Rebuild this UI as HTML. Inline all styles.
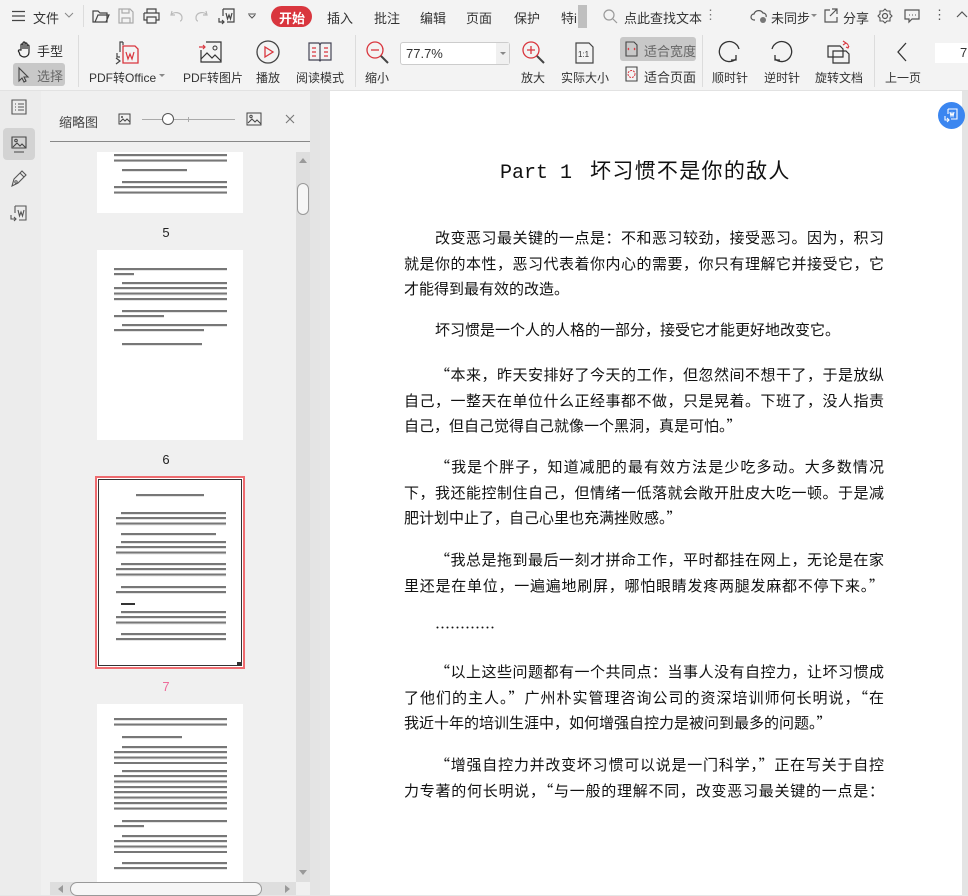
<!DOCTYPE html>
<html><head><meta charset="utf-8">
<style>
*{margin:0;padding:0;box-sizing:border-box}
body{width:968px;height:895px;overflow:hidden;background:#e6e6e6;font-family:"Liberation Sans","Noto Sans CJK SC",sans-serif;color:#333;position:relative}
.abs{position:absolute}
.tb{left:0;top:0;width:968px;height:91px;background:#f3f3f3;border-bottom:1px solid #e2e2e2}
.t{position:absolute;font-size:13px;color:#333;white-space:nowrap}
.lab{position:absolute;font-size:12px;color:#333;white-space:nowrap;text-align:center}
.sep{position:absolute;width:1px;background:#dcdcdc}
svg{position:absolute;overflow:visible}
.side{left:0;top:91px;width:41px;height:804px;background:#ececec}
.panel{left:41px;top:91px;width:279px;height:804px;background:#f0f0f0}
.doc{left:330px;top:91px;width:632px;height:804px;background:#fff}
.p{position:absolute;left:404px;width:480px;font-family:"Noto Sans CJK SC",sans-serif;font-size:15px;color:#111;line-height:25.5px}
.ln{display:block;text-align:justify;text-align-last:justify;height:25.5px;white-space:nowrap;overflow:visible}
.last{text-align-last:left}
.th{position:absolute;background:#fff}
.st{position:absolute;background:repeating-linear-gradient(#555 0 2px,#ddd 2px 3px,transparent 3px 5.4px);opacity:.8}
.pn{position:absolute;font-size:13px;color:#222;width:30px;text-align:center}
</style></head><body>
<div class="abs tb"></div>
<svg style="left:11px;top:10px" width="16" height="12"><path d="M1 1.5h13M1 6h13M1 10.5h13" stroke="#444" stroke-width="1.3"/></svg>
<div class="t" style="left:33px;top:8px">文件</div>
<svg style="left:64px;top:12px" width="10" height="6"><path d="M1 1l4 4 4-4" stroke="#888" fill="none"/></svg>
<div class="sep" style="left:83px;top:5px;height:22px"></div>
<svg style="left:92px;top:8px" width="18" height="16"><path d="M1 3h5l2 2h7v9H1z M3 14l3-7h11l-3 7" stroke="#444" fill="none" stroke-width="1.2"/></svg>
<svg style="left:118px;top:8px" width="16" height="16"><path d="M1 1h11l3 3v11H1z M4 1v4h7V1 M4 15v-5h8v5" stroke="#aaa" fill="none" stroke-width="1.2"/></svg>
<svg style="left:143px;top:8px" width="17" height="16"><path d="M4 5V1h9v4 M1 5h15v7h-3 M4 12H1V5 M4 9h9v6H4z" stroke="#444" fill="none" stroke-width="1.2"/></svg>
<svg style="left:170px;top:10px" width="13" height="12"><path d="M2 1L1 5l4 0 M1 5c3-4 11-3 11 3 0 2-1 3-2 3" stroke="#bbb" fill="none" stroke-width="1.2"/></svg>
<svg style="left:195px;top:10px" width="13" height="12"><path d="M11 1l1 4-4 0 M12 5C9 1 1 2 1 8c0 2 1 3 2 3" stroke="#bbb" fill="none" stroke-width="1.2"/></svg>
<svg style="left:218px;top:8px" width="18" height="18"><path d="M5 1h11v13H9 M5 1v7 M8 5l1.5 6 1.5-4 1.5 4L14 5 M1 10v4h5 M4 12l2 2-2 2" stroke="#444" fill="none" stroke-width="1.2"/></svg>
<svg style="left:247px;top:13px" width="10" height="6"><path d="M1 1h8 M2 2l3 3 3-3" stroke="#555" fill="none"/></svg>
<div class="abs" style="left:271px;top:6px;width:41px;height:21px;border-radius:11px;background:#d9363e"></div>
<div class="t" style="left:279px;top:8px;color:#fff;font-weight:bold">开始</div>
<div class="t" style="left:327px;top:8px">插入</div>
<div class="t" style="left:374px;top:8px">批注</div>
<div class="t" style="left:420px;top:8px">编辑</div>
<div class="t" style="left:466px;top:8px">页面</div>
<div class="t" style="left:514px;top:8px">保护</div>
<div class="t" style="left:561px;top:8px">特i</div>
<div class="abs" style="left:578px;top:5px;width:9px;height:23px;background:#bfbfbf"></div>
<svg style="left:603px;top:9px" width="15" height="15"><circle cx="6" cy="6" r="5" stroke="#999" fill="none" stroke-width="1.2"/><path d="M10 10l4 4" stroke="#999" stroke-width="1.2"/></svg>
<div class="t" style="left:624px;top:8px">点此查找文本</div>
<div class="t" style="left:704px;top:7px;color:#777">⋮</div>
<svg style="left:751px;top:8px" width="18" height="16"><path d="M4 12H3a3 3 0 010-6 5 5 0 019-1 3 3 0 013 4" stroke="#555" fill="none" stroke-width="1.2"/><circle cx="12" cy="12" r="3" fill="#777"/></svg>
<div class="t" style="left:771px;top:8px">未同步</div>
<svg style="left:811px;top:14px" width="6" height="4"><path d="M0 0h6L3 3z" fill="#888"/></svg>
<svg style="left:823px;top:8px" width="16" height="16"><path d="M7 2H2v12h12V9 M9 1h5v5 M14 1L7 8" stroke="#555" fill="none" stroke-width="1.2"/></svg>
<div class="t" style="left:843px;top:8px">分享</div>
<svg style="left:877px;top:8px" width="16" height="16"><circle cx="8" cy="8" r="2.5" stroke="#555" fill="none" stroke-width="1.2"/><path d="M8 1l2 2 3 0 0 3 2 2-2 2 0 3-3 0-2 2-2-2-3 0 0-3-2-2 2-2 0-3 3 0z" stroke="#555" fill="none" stroke-width="1.1"/></svg>
<svg style="left:904px;top:9px" width="16" height="14"><path d="M1 1h14v9H8l-3 3v-3H1z" stroke="#555" fill="none" stroke-width="1.2"/><path d="M5 6h1M8 6h1M11 6h1" stroke="#555"/></svg>
<div class="t" style="left:933px;top:7px;color:#555">⋮</div>
<svg style="left:957px;top:11px" width="11" height="7"><path d="M0 6l5-5 5 5" stroke="#555" fill="none" stroke-width="1.2"/></svg>
<svg style="left:17px;top:41px" width="17" height="17"><path d="M4 9V4a1 1 0 012 0v4V2a1 1 0 012 0v6V3a1 1 0 012 0v5V5a1 1 0 012 0v6c0 3-2 5-5 5-2 0-3-1-4-2L2 11a1 1 0 011-2z" stroke="#222" fill="none" stroke-width="1.2"/></svg>
<div class="t" style="left:37px;top:41px">手型</div>
<div class="abs" style="left:13px;top:63px;width:52px;height:23px;background:#c8c8c8;border-radius:3px"></div>
<svg style="left:18px;top:67px" width="12" height="16"><path d="M1 1v13l3-3 2 4 2-1-2-4h4z" stroke="#444" fill="none" stroke-width="1.1"/></svg>
<div class="t" style="left:37px;top:66px;color:#666">选择</div>
<div class="sep" style="left:78px;top:35px;height:52px"></div>
<svg style="left:113px;top:40px" width="28" height="26"><path d="M10 2H7v10 M10 2v3 M4 13v4h3" stroke="#444" fill="none" stroke-width="1.2"/><path d="M10 6h12l3 3v14H10z" stroke="#d9363e" fill="none" stroke-width="1.3"/><path d="M13 12l2 7 2-5 2 5 2-7" stroke="#d9363e" fill="none" stroke-width="1.2"/><path d="M3 18l4 3-4 3" stroke="#444" fill="none" stroke-width="1.2"/></svg>
<div class="lab" style="left:89px;top:69px">PDF转Office</div>
<svg style="left:159px;top:74px" width="6" height="4"><path d="M0 0h6L3 3z" fill="#888"/></svg>
<svg style="left:199px;top:41px" width="24" height="22"><path d="M7 1h15v20H2V9" stroke="#333" fill="none" stroke-width="1.2"/><path d="M0 6h6 M4 4l2 2-2 2" stroke="#d9363e" fill="none" stroke-width="1.2"/><circle cx="16" cy="7" r="2" stroke="#333" fill="none"/><path d="M2 18l6-6 5 5 3-3 6 6" stroke="#333" fill="none" stroke-width="1.2"/></svg>
<div class="lab" style="left:183px;top:69px">PDF转图片</div>
<svg style="left:256px;top:40px" width="24" height="24"><circle cx="12" cy="12" r="11" stroke="#444" fill="none" stroke-width="1.3"/><path d="M9 7v10l8-5z" stroke="#d9363e" fill="none" stroke-width="1.3"/></svg>
<div class="lab" style="left:256px;top:69px">播放</div>
<svg style="left:308px;top:42px" width="24" height="20"><path d="M1 1h10l1 2 1-2h10v17H13l-1 1-1-1H1z M12 3v15" stroke="#445" fill="none" stroke-width="1.2"/><path d="M4 6h4M4 10h4M4 14h4M16 6h4M16 10h4M16 14h4" stroke="#d9363e" stroke-width="1.2"/></svg>
<div class="lab" style="left:296px;top:69px">阅读模式</div>
<div class="sep" style="left:355px;top:35px;height:52px"></div>
<svg style="left:366px;top:41px" width="24" height="24"><circle cx="9" cy="9" r="8" stroke="#d9363e" fill="none" stroke-width="1.3"/><path d="M5 9h8" stroke="#d9363e" stroke-width="1.3"/><path d="M15 15l7 7" stroke="#444" stroke-width="2"/></svg>
<div class="lab" style="left:365px;top:69px">缩小</div>
<div class="abs" style="left:400px;top:42px;width:110px;height:23px;border:1px solid #ccc;border-radius:3px;background:#fff"></div>
<div class="abs" style="left:496px;top:43px;width:13px;height:21px;background:#f0f0f0"></div>
<svg style="left:500px;top:52px" width="6" height="4"><path d="M0 0h6L3 3z" fill="#888"/></svg>
<div class="t" style="left:406px;top:46px">77.7%</div>
<svg style="left:522px;top:41px" width="24" height="24"><circle cx="9" cy="9" r="8" stroke="#d9363e" fill="none" stroke-width="1.3"/><path d="M5 9h8M9 5v8" stroke="#d9363e" stroke-width="1.3"/><path d="M15 15l7 7" stroke="#444" stroke-width="2"/></svg>
<div class="lab" style="left:521px;top:69px">放大</div>
<svg style="left:575px;top:42px" width="20" height="22"><path d="M1 1h13l4 4v16H1z" stroke="#444" fill="none" stroke-width="1.2"/><text x="3" y="15" font-size="8" fill="#333" font-family="Liberation Sans">1:1</text></svg>
<div class="lab" style="left:561px;top:69px">实际大小</div>
<div class="abs" style="left:620px;top:37px;width:76px;height:24px;background:#c8c8c8;border-radius:3px"></div>
<svg style="left:625px;top:41px" width="13" height="16"><path d="M1 1h8l3 3v11H1z" stroke="#444" fill="none" stroke-width="1.1"/><path d="M4 7l-1 1 1 1M9 7l1 1-1 1" stroke="#d9363e" fill="none"/></svg>
<div class="t" style="left:644px;top:41px;color:#666">适合宽度</div>
<svg style="left:625px;top:66px" width="13" height="16"><path d="M1 1h11v14H1z" stroke="#444" fill="none" stroke-width="1.1"/><circle cx="6.5" cy="8" r="3.5" stroke="#d9363e" fill="none" stroke-dasharray="2 1"/></svg>
<div class="t" style="left:644px;top:67px">适合页面</div>
<div class="sep" style="left:702px;top:35px;height:52px"></div>
<svg style="left:719px;top:41px" width="22" height="22"><path d="M17 18A10 10 0 1 1 20 8" stroke="#333" fill="none" stroke-width="1.3"/><path d="M17 14v5h-5" stroke="#333" fill="none" stroke-width="1.3"/></svg>
<div class="lab" style="left:712px;top:69px">顺时针</div>
<svg style="left:770px;top:41px" width="22" height="22"><path d="M5 18A10 10 0 1 0 2 8" stroke="#333" fill="none" stroke-width="1.3"/><path d="M5 14v5h5" stroke="#333" fill="none" stroke-width="1.3"/></svg>
<div class="lab" style="left:764px;top:69px">逆时针</div>
<svg style="left:827px;top:40px" width="24" height="24"><path d="M1 6h12l3 3v8H1z M6 11h13l3 3v9H6z" stroke="#333" fill="#f3f3f3" stroke-width="1.2"/><path d="M16 1l3 2-3 2 M19 3c2 1 3 3 2 5 M22 6l-1 2-2-1" stroke="#d9363e" fill="none" stroke-width="1.1"/></svg>
<div class="lab" style="left:815px;top:69px">旋转文档</div>
<div class="sep" style="left:874px;top:35px;height:52px"></div>
<svg style="left:897px;top:42px" width="10" height="20"><path d="M9 1L1 10l8 9" stroke="#333" fill="none" stroke-width="1.3"/></svg>
<div class="lab" style="left:885px;top:69px">上一页</div>
<div class="abs" style="left:935px;top:43px;width:33px;height:20px;background:#fff"></div>
<div class="t" style="left:960px;top:45px">7</div>

<div class="abs side"></div>
<svg style="left:11px;top:99px" width="16" height="16"><path d="M1 1h14v14H1z" stroke="#555" fill="none" stroke-width="1.1"/><path d="M4 5h1M7 5h6M4 8h1M7 8h6M4 11h1M7 11h6" stroke="#555"/></svg>
<div class="abs" style="left:3px;top:128px;width:32px;height:32px;background:#d3d3d3;border-radius:4px"></div>
<svg style="left:11px;top:136px" width="16" height="18"><path d="M1 1h14v11H1z" stroke="#444" fill="none" stroke-width="1.1"/><circle cx="5" cy="4.5" r="1.3" stroke="#444" fill="none"/><path d="M2 11l4-4 3 3 2-2 4 4 M3 16h10" stroke="#444" fill="none" stroke-width="1.1"/></svg>
<svg style="left:10px;top:170px" width="18" height="18"><path d="M2 16l2-7 6-6 4 4-6 6z M10 3l2-2 4 4-2 2" stroke="#555" fill="none" stroke-width="1.1"/><circle cx="6" cy="12" r="1.2" stroke="#555" fill="none"/></svg>
<svg style="left:10px;top:205px" width="18" height="18"><path d="M5 1h11v14H9 M5 1v7 M8 5l1.5 6 1.5-4 1.5 4L14 5 M1 10v4h5 M4 12l2 2-2 2" stroke="#555" fill="none" stroke-width="1.1"/></svg>

<div class="abs panel"></div>
<div class="t" style="left:59px;top:112px;color:#444">缩略图</div>
<svg style="left:118px;top:113px" width="13" height="12"><path d="M1 1h11v10H1z M2 9l3-3 2 2 2-2 3 3" stroke="#444" fill="none"/><circle cx="4" cy="4" r="1" fill="#444"/></svg>
<div class="abs" style="left:142px;top:119px;width:93px;height:1px;background:#aaa"></div>
<div class="abs" style="left:162px;top:113px;width:12px;height:12px;border:1px solid #555;border-radius:50%;background:#fff"></div>
<div class="abs" style="left:188px;top:117px;width:1px;height:5px;background:#aaa"></div>
<svg style="left:246px;top:112px" width="16" height="14"><path d="M1 1h14v12H1z M2 11l4-4 3 3 2-2 4 4" stroke="#444" fill="none"/><circle cx="5" cy="4.5" r="1.2" stroke="#444" fill="none"/></svg>
<svg style="left:285px;top:114px" width="10" height="10"><path d="M1 1l8 8M9 1l-8 8" stroke="#777" stroke-width="1.1"/></svg>
<div class="abs" style="left:50px;top:141px;width:260px;height:1px;background:#888"></div>
<div class="abs" style="left:296px;top:152px;width:14px;height:730px;background:#dedede"></div>
<svg style="left:299px;top:158px" width="8" height="5"><path d="M0 5h8L4 0z" fill="#999"/></svg>
<div class="abs" style="left:297px;top:183px;width:12px;height:32px;border:1px solid #999;border-radius:6px;background:#f6f6f6"></div>
<svg style="left:299px;top:870px" width="8" height="5"><path d="M0 0h8L4 5z" fill="#999"/></svg>
<div class="abs" style="left:50px;top:882px;width:246px;height:13px;background:#dedede"></div>
<div class="abs" style="left:70px;top:882px;width:192px;height:14px;border:1px solid #999;border-radius:7px;background:#f6f6f6"></div>
<svg style="left:58px;top:885px" width="5" height="8"><path d="M5 0v8L0 4z" fill="#999"/></svg>
<svg style="left:285px;top:885px" width="5" height="8"><path d="M0 0v8l5-4z" fill="#999"/></svg>
<div class="abs" style="left:310px;top:91px;width:10px;height:804px;background:#e4e4e4"></div>

<div class="th" style="left:97px;top:152px;width:146px;height:61px"></div>
<div class="st" style="left:114px;top:154px;width:113px;height:8px"></div>
<div class="st" style="left:122px;top:169px;width:65px;height:3px"></div>
<div class="st" style="left:122px;top:181px;width:105px;height:3px"></div>
<div class="st" style="left:114px;top:186px;width:113px;height:8px"></div>
<div class="pn" style="left:151px;top:225px">5</div>
<div class="th" style="left:97px;top:250px;width:146px;height:190px"></div>
<div class="st" style="left:114px;top:268px;width:113px;height:3px"></div>
<div class="st" style="left:114px;top:273px;width:20px;height:3px"></div>
<div class="st" style="left:122px;top:282px;width:105px;height:3px"></div>
<div class="st" style="left:114px;top:287px;width:113px;height:14px"></div>
<div class="st" style="left:122px;top:310px;width:105px;height:3px"></div>
<div class="st" style="left:114px;top:315px;width:50px;height:3px"></div>
<div class="st" style="left:122px;top:324px;width:105px;height:3px"></div>
<div class="st" style="left:114px;top:329px;width:90px;height:3px"></div>
<div class="st" style="left:122px;top:343px;width:80px;height:3px"></div>
<div class="pn" style="left:151px;top:452px">6</div>
<div class="abs" style="left:95px;top:476px;width:150px;height:193px;border:2px solid #ee6b6f;background:#fff"></div>
<div class="abs" style="left:98px;top:479px;width:144px;height:187px;border:1px solid #333"></div>
<div class="abs" style="left:237px;top:662px;width:5px;height:4px;background:#333"></div>
<div class="st" style="left:136px;top:494px;width:68px;height:3px"></div>
<div class="st" style="left:121px;top:512px;width:105px;height:3px"></div>
<div class="st" style="left:116px;top:517px;width:110px;height:9px"></div>
<div class="st" style="left:121px;top:533px;width:95px;height:3px"></div>
<div class="st" style="left:121px;top:541px;width:105px;height:3px"></div>
<div class="st" style="left:116px;top:546px;width:110px;height:9px"></div>
<div class="st" style="left:121px;top:563px;width:105px;height:3px"></div>
<div class="st" style="left:116px;top:568px;width:110px;height:9px"></div>
<div class="st" style="left:121px;top:586px;width:105px;height:3px"></div>
<div class="st" style="left:116px;top:591px;width:110px;height:3px"></div>
<div class="abs" style="left:121px;top:603px;width:14px;height:2px;background:#333"></div>
<div class="st" style="left:121px;top:611px;width:105px;height:3px"></div>
<div class="st" style="left:116px;top:616px;width:110px;height:9px"></div>
<div class="st" style="left:121px;top:633px;width:105px;height:3px"></div>
<div class="st" style="left:116px;top:638px;width:110px;height:3px"></div>
<div class="pn" style="left:151px;top:679px;color:#ee6b9a">7</div>
<div class="th" style="left:97px;top:704px;width:146px;height:178px"></div>
<div class="st" style="left:114px;top:718px;width:113px;height:8px"></div>
<div class="st" style="left:122px;top:736px;width:60px;height:3px"></div>
<div class="st" style="left:122px;top:746px;width:105px;height:3px"></div>
<div class="st" style="left:114px;top:751px;width:113px;height:13px"></div>
<div class="st" style="left:122px;top:770px;width:105px;height:3px"></div>
<div class="st" style="left:114px;top:775px;width:113px;height:35px"></div>
<div class="st" style="left:122px;top:820px;width:105px;height:3px"></div>
<div class="st" style="left:114px;top:825px;width:30px;height:3px"></div>
<div class="st" style="left:122px;top:835px;width:105px;height:3px"></div>
<div class="st" style="left:114px;top:840px;width:113px;height:13px"></div>
<div class="st" style="left:122px;top:862px;width:105px;height:3px"></div>
<div class="st" style="left:114px;top:867px;width:113px;height:3px"></div>

<div class="abs doc"></div>
<div class="abs" style="left:962px;top:91px;width:6px;height:804px;background:#e4e4e4"></div>
<div class="abs" style="left:938px;top:102px;width:27px;height:27px;border-radius:50%;background:#3b86f0"></div>
<svg style="left:944px;top:108px" width="15" height="15"><path d="M4 1h9v10H7 M4 1v5 M6 4l1 4 1-3 1 3 1-4 M1 8v4h4 M3 10l2 2-2 2" stroke="#fff" fill="none" stroke-width="1.1"/></svg>
<div class="abs" style="left:500px;top:155px;font-size:20px;color:#111;white-space:nowrap"><span style="font-family:'Liberation Mono',monospace">Part 1</span><span style="display:inline-block;width:18px"></span><span style="font-family:'Noto Sans CJK SC',sans-serif;font-size:21px;letter-spacing:1.3px">坏习惯不是你的敌人</span></div>

<div class="p" style="top:225px">
<span class="ln" style="padding-left:31px">改变恶习最关键的一点是：不和恶习较劲，接受恶习。因为，积习</span>
<span class="ln">就是你的本性，恶习代表着你内心的需要，你只有理解它并接受它，它</span>
<span class="ln last">才能得到最有效的改造。</span></div>
<div class="p" style="top:317px"><span class="ln last" style="padding-left:31px">坏习惯是一个人的人格的一部分，接受它才能更好地改变它。</span></div>
<div class="p" style="top:362px">
<span class="ln" style="padding-left:31px">“本来，昨天安排好了今天的工作，但忽然间不想干了，于是放纵</span>
<span class="ln">自己，一整天在单位什么正经事都不做，只是晃着。下班了，没人指责</span>
<span class="ln last">自己，但自己觉得自己就像一个黑洞，真是可怕。”</span></div>
<div class="p" style="top:454px">
<span class="ln" style="padding-left:31px">“我是个胖子，知道减肥的最有效方法是少吃多动。大多数情况</span>
<span class="ln">下，我还能控制住自己，但情绪一低落就会敞开肚皮大吃一顿。于是减</span>
<span class="ln last">肥计划中止了，自己心里也充满挫败感。”</span></div>
<div class="p" style="top:547px">
<span class="ln" style="padding-left:31px">“我总是拖到最后一刻才拼命工作，平时都挂在网上，无论是在家</span>
<span class="ln">里还是在单位，一遍遍地刷屏，哪怕眼睛发疼两腿发麻都不停下来。”</span></div>
<div class="p" style="top:615px"><span class="ln last" style="padding-left:31px">…………</span></div>
<div class="p" style="top:659px">
<span class="ln" style="padding-left:31px">“以上这些问题都有一个共同点：当事人没有自控力，让坏习惯成</span>
<span class="ln">了他们的主人。”广州朴实管理咨询公司的资深培训师何长明说，“在</span>
<span class="ln last">我近十年的培训生涯中，如何增强自控力是被问到最多的问题。”</span></div>
<div class="p" style="top:752px">
<span class="ln" style="padding-left:31px">“增强自控力并改变坏习惯可以说是一门科学，”正在写关于自控</span>
<span class="ln">力专著的何长明说，“与一般的理解不同，改变恶习最关键的一点是：</span></div>
</body></html>
